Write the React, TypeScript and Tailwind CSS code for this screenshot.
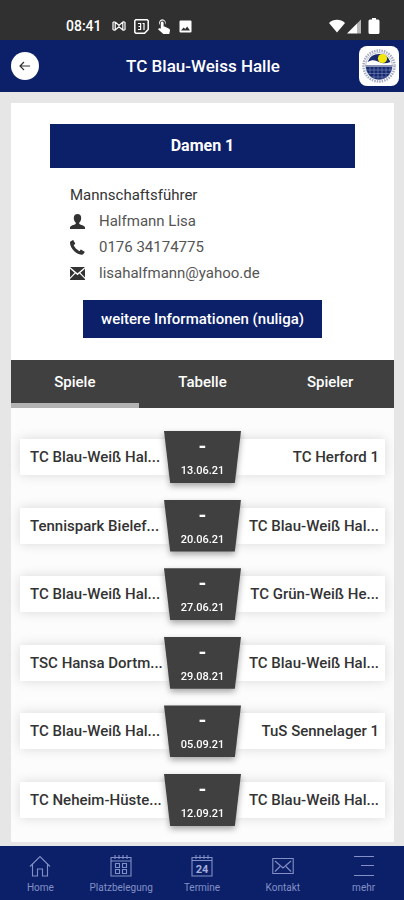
import { useState } from "react";

interface Match {
  home: string;
  guest: string;
  date: string;
}

const MATCHES: Match[] = [
  { home: "TC Blau-Weiß Hal...", guest: "TC Herford 1", date: "13.06.21" },
  { home: "Tennispark Bielef...", guest: "TC Blau-Weiß Hal...", date: "20.06.21" },
  { home: "TC Blau-Weiß Hal...", guest: "TC Grün-Weiß He...", date: "27.06.21" },
  { home: "TSC Hansa Dortm...", guest: "TC Blau-Weiß Hal...", date: "29.08.21" },
  { home: "TC Blau-Weiß Hal...", guest: "TuS Sennelager 1", date: "05.09.21" },
  { home: "TC Neheim-Hüste...", guest: "TC Blau-Weiß Hal...", date: "12.09.21" },
];

const TABS = ["Spiele", "Tabelle", "Spieler"];

function StatusBar() {
  return (
    <div className="flex h-10 items-end justify-between bg-[#303030] pr-6 pb-1 pl-[66px] text-white">
      <div className="flex items-center gap-2">
        <span className="mr-0.5 text-sm leading-5 font-medium">08:41</span>
        <svg width="14" height="12" viewBox="0 0 14 12" fill="none" stroke="currentColor" strokeWidth="1.2">
          <path d="M1 2v8M3.2 2v8l3.800-3.200L10.800 10V2L7 5.400 3.200 2M13 2v8M1 2h2M1 10h2M11 2h2M11 10h2" />
        </svg>
        <svg width="15" height="15" viewBox="0 0 15 15" fill="none" stroke="currentColor" strokeWidth="1.5">
          <path d="M1.800.8h11.400l1 1v8.700l-3.700 3.700H1.800l-1-1V1.800z" />
          <path d="M4 4.500h2.600v6H4M4.500 7.500h2M8.500 4.500H10v6.500" strokeWidth="1.2" />
        </svg>
        <svg width="14" height="15" viewBox="0 0 14 15" fill="currentColor">
          <path d="M5 .2a3.600 3.600 0 0 1 3 5.600V4a2.500 2.500 0 1 0-5 0v2A3.600 3.600 0 0 1 5 .2z" />
          <path d="M3.800 4a1.400 1.400 0 0 1 2.800 0v3.500l1 .1 4.500 2.100c.7.400 1 1 .9 1.700l-.6 3c-.1.400-.4.600-.8.600H6.300L1 10.300l.8-.8c.5-.4.900-.3 2 .2z" />
        </svg>
        <svg width="13" height="13" viewBox="0 0 13 13" fill="currentColor">
          <path
            fillRule="evenodd"
            d="M1.500.5h10a1 1 0 0 1 1 1v10a1 1 0 0 1-1 1h-10a1 1 0 0 1-1-1v-10a1 1 0 0 1 1-1zM2 10.500h9L8.200 6.600 6.200 9 4.600 7.400z"
          />
        </svg>
      </div>
      <div className="flex items-center gap-0.5 pb-0.5">
        <svg width="16" height="15" viewBox="0 0 16 15" fill="currentColor">
          <path d="M0 4a11.500 11.500 0 0 1 16 0L8 13.500z" />
        </svg>
        <svg width="15" height="15" viewBox="0 0 15 15" fill="currentColor">
          <path d="M10.500 4v10.500H0z" />
          <path d="M10.500 4L14 .5v14h-3.500z" opacity=".65" />
        </svg>
        <svg className="ml-1" width="12" height="16" viewBox="0 0 12 16" fill="currentColor">
          <path d="M4 0h4v1.500h2A1.500 1.500 0 0 1 11.500 3v11.500A1.500 1.500 0 0 1 10 16H2a1.500 1.500 0 0 1-1.500-1.500V3A1.500 1.500 0 0 1 2 1.500h2z" />
        </svg>
      </div>
    </div>
  );
}

function ClubLogo() {
  return (
    <div className="flex size-10 items-center justify-center rounded-lg bg-white">
      <svg width="36" height="36" viewBox="0 0 36 36">
        <circle cx="18" cy="18" r="15.500" fill="none" stroke="#a4a9c0" strokeWidth="2.500" strokeDasharray="1.500 1" />
        <circle cx="18" cy="18" r="13.500" fill="#fff" stroke="#8d95b8" strokeWidth=".6" />
        <path d="M6.500 14a12.300 12.300 0 0 1 23 0c-2 .8-4 1.200-6 1.200-5 0-8-3.500-12-3-2 .2-3.500.9-5 1.800z" fill="#1b2c6e" />
        <circle cx="21.500" cy="10.500" r="4.600" fill="#f3e60c" />
        <path d="M5 18.500h26a13 13 0 0 1-26 0z" fill="#14296f" />
        <path
          d="M9 18.500v8M13 18.500v12M17 18.500v13M21 18.500v13M25 18.500v10M29 18.500v5M5 22h26M7 25.500h22M10 29h16"
          fill="none"
          stroke="#7f8cbd"
          strokeWidth=".6"
        />
        <path d="M4.500 17.500h27" stroke="#8d95b8" strokeWidth="1" />
      </svg>
    </div>
  );
}

function Header() {
  return (
    <header className="grid grid-cols-[40px_1fr_40px] items-center bg-[#0c2069] py-1.5 pr-[5px] pl-[7px]">
      <button
        type="button"
        aria-label="Zurück"
        className="ml-1 flex size-7 items-center justify-center rounded-full bg-white text-[#333]"
      >
        <svg width="12" height="10" viewBox="0 0 12 10" fill="none" stroke="currentColor" strokeWidth="1.2">
          <path d="M11 5H1M5 1L1 5l4 4" />
        </svg>
      </button>
      <h1 className="text-center text-[17px] leading-6 font-medium text-white">TC Blau-Weiss Halle</h1>
      <ClubLogo />
    </header>
  );
}

function Contact() {
  return (
    <section className="px-[59px] pt-3.5 text-[15px] leading-[26px] text-[#555]">
      <h3 className="text-[#333]">Mannschaftsführer</h3>
      <ul>
        <li className="flex items-center gap-3.5">
          <svg width="15" height="15" viewBox="0 0 15 15" fill="#333">
            <path d="M7.500 0c2.300 0 3.700 1.600 3.700 3.900 0 2-.8 3.700-1.900 4.600v1.400c1.500.9 5.200 1.600 5.700 3.300V15H0v-1.800c.5-1.700 4.200-2.400 5.700-3.300V8.500C4.600 7.600 3.800 5.900 3.800 3.900 3.800 1.600 5.200 0 7.500 0z" />
          </svg>
          Halfmann Lisa
        </li>
        <li className="flex items-center gap-3.5">
          <svg width="15" height="15" viewBox="0 0 15 15" fill="#333">
            <path d="M.8 1.200L2.600.2c.4-.2.700-.1.900.3l1.600 2.800c.2.400.1.700-.2.900l-1.300.9c1.100 2.500 2.900 4.500 5.800 6.100l1-1.300c.2-.3.600-.4.900-.2l3 1.700c.4.200.5.600.3.900l-1.200 1.800c-.4.600-1.200.8-2 .7C5.900 14.100.5 8.600 0 3.200c-.1-.9.200-1.600.8-2z" />
          </svg>
          0176 34174775
        </li>
        <li className="flex items-center gap-3.5">
          <svg width="15" height="13" viewBox="0 0 15 13" fill="#333">
            <path d="M0 0h15L7.500 6.200zM0 1.800l4.600 3.900L0 10.500zM15 1.800v8.700l-4.600-4.800zM5.500 6.500l2 1.700 2-1.700L15 12v1H0v-1z" />
          </svg>
          <a href="mailto:lisahalfmann@yahoo.de">lisahalfmann@yahoo.de</a>
        </li>
      </ul>
    </section>
  );
}

function MatchRow({ match }: { match: Match }) {
  return (
    <li className="flex items-center">
      <div className="min-w-0 flex-1 bg-white py-2 pl-2.5 whitespace-nowrap shadow-[0_0_12px_rgba(0,0,0,0.14)]">
        {match.home}
      </div>
      <div className="relative -mx-1 w-[77px] shrink-0 drop-shadow-[0_3px_3px_rgba(0,0,0,0.35)]">
        <div className="flex h-[52px] flex-col items-center bg-[#404040] pt-0.5 text-white [clip-path:polygon(0_0,100%_0,92%_100%,8%_100%)]">
          <span className="text-xl leading-[26px] font-bold">-</span>
          <time className="text-[11px] leading-6">{match.date}</time>
        </div>
      </div>
      <div className="min-w-0 flex-1 bg-white py-2 pr-1.5 pl-1 text-right whitespace-nowrap shadow-[0_0_12px_rgba(0,0,0,0.14)]">
        {match.guest}
      </div>
    </li>
  );
}

function BottomNav() {
  return (
    <nav className="grid grid-cols-5 bg-[#0c2069] pt-[9px] pb-1 text-[10px] leading-4 text-[#8290c6]">
      <a href="#home" className="flex flex-col items-center gap-[3px]">
        <svg width="22" height="22" viewBox="0 0 22 22" fill="none" stroke="currentColor" strokeWidth="1.1">
          <path d="M1 11.500L11 1.500l10 10M3.500 9.500v11.500H8.500v-7h5v7h5V9.500" />
        </svg>
        Home
      </a>
      <a href="#platzbelegung" className="flex flex-col items-center gap-[3px]">
        <svg width="22" height="22" viewBox="0 0 22 22" fill="none" stroke="currentColor" strokeWidth="1.1">
          <path d="M1 2.500h20V21H1zM1 6h20M5 0v4M9 0v4M13 0v4M17 0v4" />
          <path d="M5.500 8.500h4v4h-4zM12.500 8.500h4v4h-4zM5.500 14.500h4v4h-4zM12.500 14.500h4v4h-4z" />
        </svg>
        Platzbelegung
      </a>
      <a href="#termine" className="flex flex-col items-center gap-[3px]">
        <svg width="22" height="22" viewBox="0 0 22 22" fill="none" stroke="currentColor" strokeWidth="1.1">
          <path d="M1 2.500h20V21H1zM1 5.500h20M5 0v4M9 0v4M13 0v4M17 0v4" />
          <text
            x="11"
            y="17.500"
            textAnchor="middle"
            fontSize="11"
            fontWeight="700"
            fill="#a3aeda"
            stroke="none"
          >
            24
          </text>
        </svg>
        Termine
      </a>
      <a href="#kontakt" className="flex flex-col items-center gap-[3px]">
        <svg width="22" height="22" viewBox="0 0 22 22" fill="none" stroke="currentColor" strokeWidth="1.1">
          <path d="M.8 3.500h20.400v15H.8zM3 6l8 7 8-7M3 16.500l5-5M19 16.500l-5-5" />
        </svg>
        Kontakt
      </a>
      <a href="#mehr" className="flex flex-col items-center gap-[3px]">
        <svg width="22" height="22" viewBox="0 0 22 22" fill="none" stroke="currentColor" strokeWidth="1.1">
          <path d="M1 1.500h20M8 10.500h13M1 20.500h20" />
        </svg>
        mehr
      </a>
    </nav>
  );
}

export default function App() {
  const [activeTab, setActiveTab] = useState("Spiele");

  return (
    <div className="flex min-h-screen flex-col bg-[#e6e6e6] font-['Roboto',sans-serif]">
      <StatusBar />
      <Header />

      <main className="mt-[11px] mr-2.5 mb-1 ml-[11px] flex flex-1 flex-col bg-white">
        <h2 className="mx-[39px] mt-[21px] bg-[#0c2069] py-2.5 text-center text-base font-bold text-white">
          Damen 1
        </h2>
        <Contact />
        <button
          type="button"
          className="mx-auto mt-3.5 bg-[#0c2069] px-[18px] py-2 text-[15px] leading-[22px] font-medium text-white"
        >
          weitere Informationen (nuliga)
        </button>

        <div role="tablist" className="mt-[22px] grid grid-cols-3 bg-[#404040]">
          {TABS.map((tab) => (
            <button
              key={tab}
              type="button"
              role="tab"
              aria-selected={tab === activeTab}
              onClick={() => setActiveTab(tab)}
              className={`border-b-[5px] pt-2.5 pb-[9px] text-[15px] leading-6 font-medium text-white ${
                tab === activeTab ? "border-[#b3b3b3]" : "border-transparent"
              }`}
            >
              {tab}
            </button>
          ))}
        </div>

        <ul className="flex flex-1 flex-col justify-between gap-3 bg-[#fcfcfc] px-[9px] pt-[23px] pb-4 text-[15px] leading-5 font-medium text-[#333]">
          {MATCHES.map((match) => (
            <MatchRow key={match.date} match={match} />
          ))}
        </ul>
      </main>

      <BottomNav />
    </div>
  );
}
